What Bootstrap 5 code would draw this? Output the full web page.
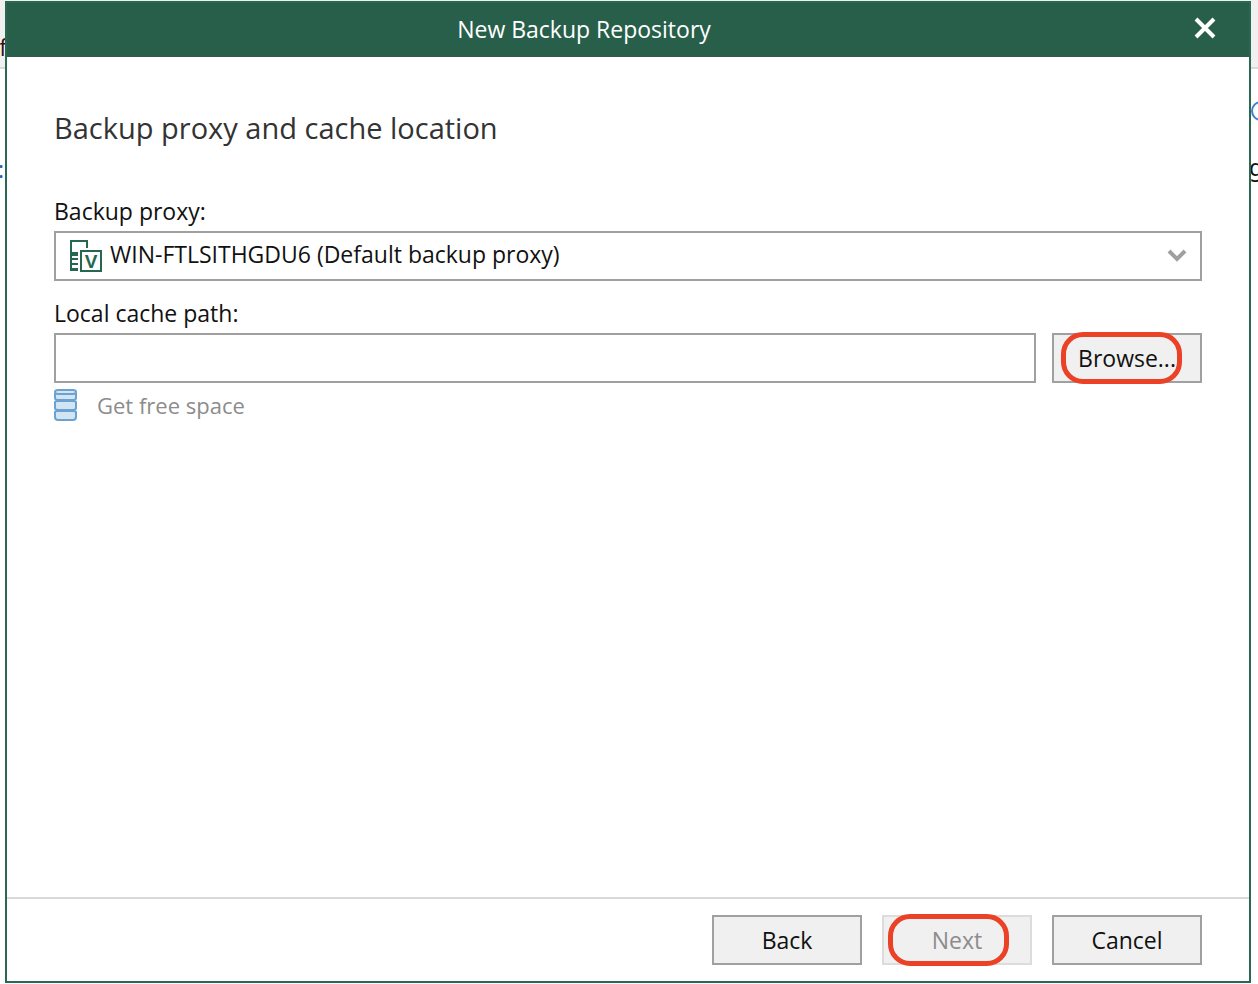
<!DOCTYPE html>
<html lang="en">
<head>
<meta charset="utf-8">
<meta name="viewport" content="width=device-width, initial-scale=1">
<title>New Backup Repository</title>
<link href="https://cdn.jsdelivr.net/npm/bootstrap@5.3.0/dist/css/bootstrap.min.css" rel="stylesheet">
<style>
  body { font-family: "Open Sans", "Noto Sans", sans-serif; font-size: 23px; line-height: 32px; color: #111; background: #fff; }
  .app-behind { z-index: 0; }
  .app-ribbon { height: 69px; background: #f0f0f0; border-bottom: 2px solid #d9d9d9; }
  .behind-item { position: absolute; white-space: nowrap; }
  .behind-tab { right: calc(100% - 7px); top: 31px; color: #3a0d12; }
  .behind-label { right: calc(100% - 4px); top: 153px; color: #1c5fa8; }
  .behind-help { right: -14px; top: 100px; }
  .behind-text { left: calc(100% - 9px); top: 151px; font-family: "Noto Sans", sans-serif; }
  .wizard { z-index: 1; height: calc(100vh - 2px); margin: 1px 7px 1px 5px; border: 2px solid #2a6854; background: #fff; }
  .wizard-title { height: 54px; background: #285f4b; color: #fff; }
  .wizard-title h1 { font-size: 23px; line-height: 32px; font-weight: 400; padding-bottom: 3px; }
  .wizard-close { width: 88px; padding: 0 0 4px; }
  .wizard-main { padding: 51px 47px 0; }
  .wizard-main h2 { font-size: 29px; line-height: 40px; font-weight: 400; color: #333; margin-bottom: 47px; }
  .field-box { height: 50px; border: 2px solid #a0a0a0; border-radius: 0; font-size: 23px; color: #111; background-color: #fff; }
  .proxy-select { padding: 0 56px 4px 54px; background-image: none; }
  .proxy-icon { position: absolute; left: 15px; top: 8px; pointer-events: none; }
  .proxy-icon text { font: 700 19px "Liberation Sans", sans-serif; }
  .proxy-arrow { position: absolute; right: 15px; top: 18px; pointer-events: none; }
  .btn-wizard { position: relative; width: 150px; height: 50px; padding: 0; border: 2px solid #a0a0a0; border-radius: 0; background: #f0f0f0; color: #111; font-size: 23px; line-height: 32px; }
  .btn-wizard:disabled { border-color: #dcdcdc; background: #f0f0f0; color: #8c8c8c; opacity: 1; }
  .btn-space { color: #8c8c8c; font-size: 22px; line-height: 32px; gap: 20px; margin-top: 6px; }
  .btn-space:disabled { color: #8c8c8c; opacity: 1; }
  .callout-ring { position: absolute; left: 7px; top: -3px; width: 121px; height: 52px; border: 5px solid #eb4127; border-radius: 22px; pointer-events: none; }
  .btn-wizard:disabled .callout-ring { left: 4px; }
  .wizard-foot { padding: 16px 47px; border-top: 2px solid #d9d9d9; gap: 20px; }
</style>
</head>
<body class="overflow-hidden">

<!-- main window, seen round the edges of the dialog -->
<div class="app-behind position-absolute top-0 start-0 w-100 vh-100 overflow-hidden" aria-hidden="true">
  <div class="app-ribbon"></div>
  <span class="behind-item behind-tab">f</span>
  <span class="behind-item behind-label">:</span>
  <svg class="behind-item behind-help" width="22" height="22" viewBox="0 0 22 22"><circle cx="11" cy="11" r="9" fill="none" stroke="#3d7fd0" stroke-width="2"/></svg>
  <span class="behind-item behind-text">g</span>
</div>

<main class="wizard position-relative d-flex flex-column">
  <header class="wizard-title d-flex align-items-stretch">
    <h1 class="flex-grow-1 text-center m-0 align-self-center">New Backup Repository</h1>
    <button type="button" class="wizard-close btn border-0 d-flex align-items-center justify-content-center" aria-label="Close">
      <svg width="22" height="22" viewBox="0 0 22 22"><path d="M2 2 20 20M20 2 2 20" stroke="#fff" stroke-width="4" fill="none"/></svg>
    </button>
  </header>

  <section class="wizard-main flex-grow-1">
    <h2>Backup proxy and cache location</h2>

    <label for="proxy" class="d-block mb-1">Backup proxy:</label>
    <div class="position-relative mb-3">
      <select id="proxy" class="form-select field-box proxy-select">
        <option>WIN-FTLSITHGDU6 (Default backup proxy)</option>
      </select>
      <svg class="proxy-icon" width="33" height="33" viewBox="0 0 33 33" fill="none" stroke="#24694f" stroke-width="2">
        <path d="M2 13V2H18V9"/>
        <path d="M1 13H9V17H1ZM1 17H3V32H1ZM1 29H9V32H1ZM3 19H9V21H3ZM3 24H9V26H3Z" fill="#24694f" stroke="none"/>
        <rect x="12" y="12" width="20" height="20"/>
        <text x="22" y="29" text-anchor="middle" fill="#24694f" stroke="none">V</text>
      </svg>
      <svg class="proxy-arrow" width="20" height="14" viewBox="0 0 20 14"><path d="M2 2 10 10 18 2" fill="none" stroke="#a0a0a0" stroke-width="4"/></svg>
    </div>

    <label for="cache" class="d-block mb-1">Local cache path:</label>
    <div class="d-flex gap-3">
      <input id="cache" type="text" class="form-control field-box flex-grow-1">
      <button type="button" class="btn btn-wizard flex-shrink-0">Browse...<span class="callout-ring"></span></button>
    </div>

    <button type="button" class="btn btn-space d-flex align-items-center p-0 border-0" disabled>
      <svg width="23" height="32" viewBox="0 0 23 32" fill="#d3e4f3" stroke="#6aa3d2" stroke-width="2">
        <path d="M1 4V9Q1 11 4 11H19Q22 11 22 9V4"/>
        <path d="M1 13V19Q1 21 4 21H19Q22 21 22 19V13Q22 12 19 12H4Q1 12 1 13Z"/>
        <path d="M1 23V28Q1 31 4 31H19Q22 31 22 28V23Q22 22 19 22H4Q1 22 1 23Z"/>
        <path d="M4 1H19Q22 1 22 3T19 5H4Q1 5 1 3T4 1Z"/>
      </svg>
      Get free space
    </button>
  </section>

  <footer class="wizard-foot d-flex justify-content-end">
    <button type="button" class="btn btn-wizard">Back</button>
    <button type="button" class="btn btn-wizard" disabled>Next<span class="callout-ring"></span></button>
    <button type="button" class="btn btn-wizard">Cancel</button>
  </footer>
</main>

<script src="https://cdn.jsdelivr.net/npm/bootstrap@5.3.0/dist/js/bootstrap.bundle.min.js"></script>
</body>
</html>
